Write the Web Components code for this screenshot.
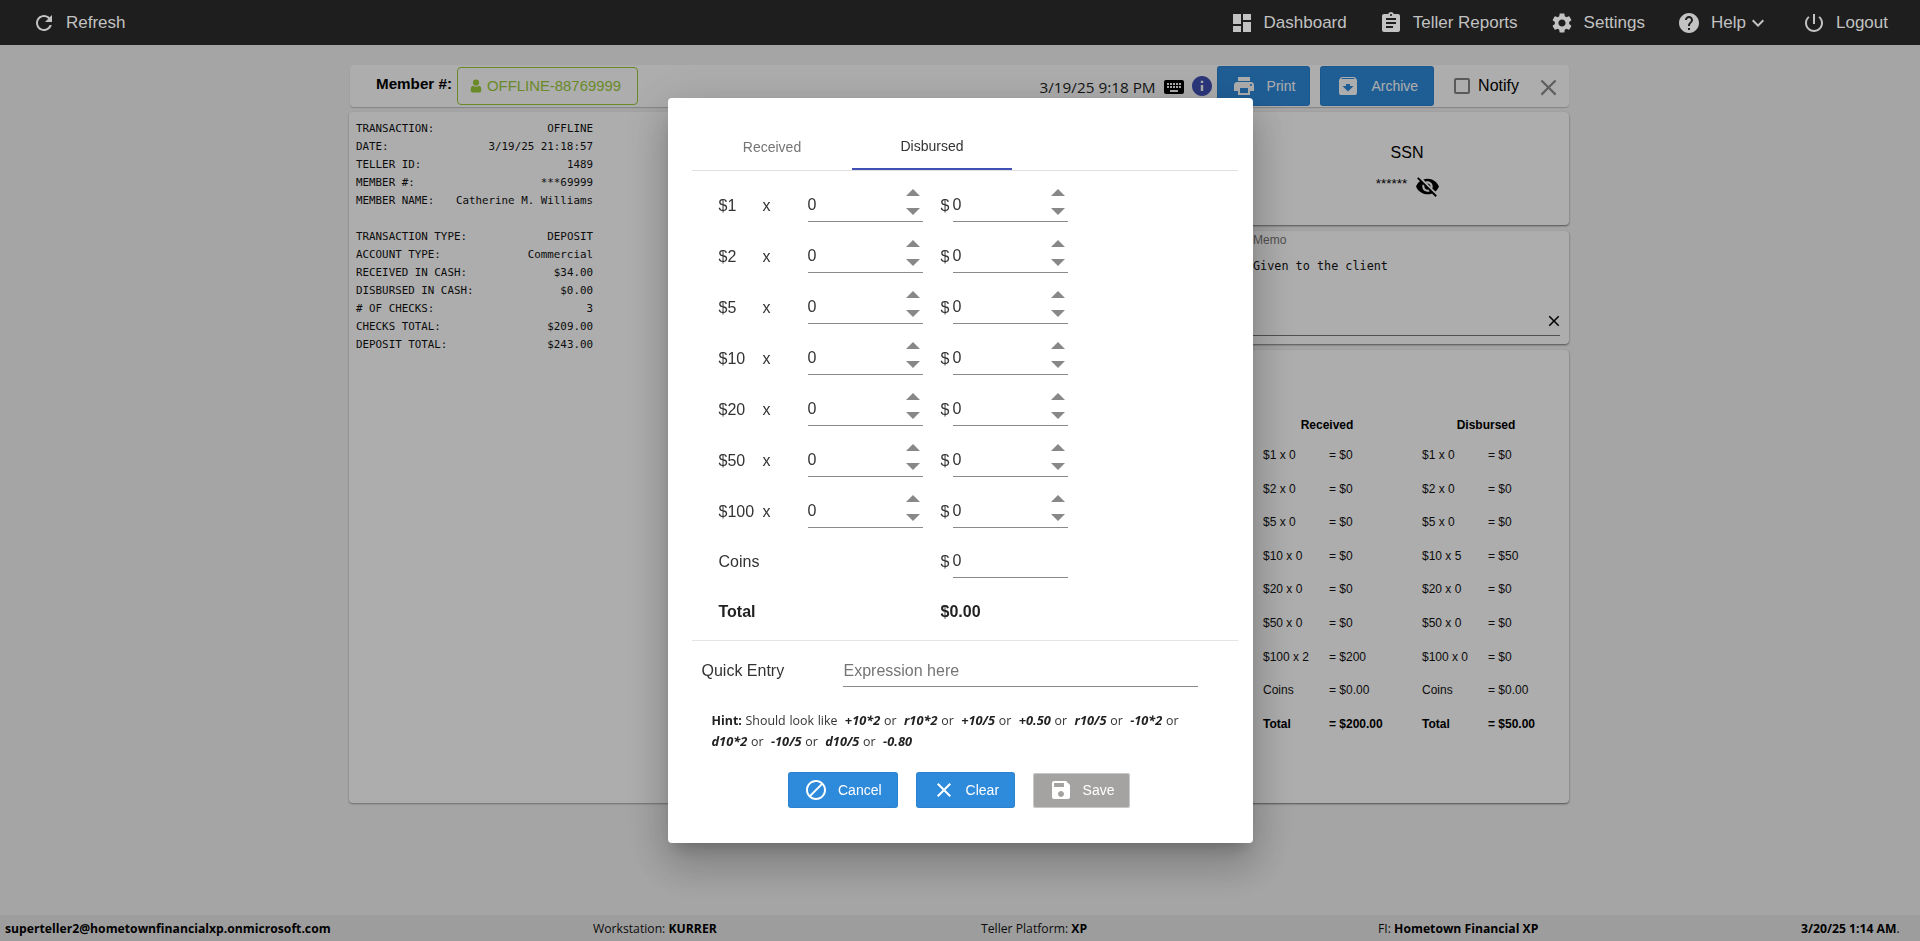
<!DOCTYPE html>
<html lang="en">
<head>
<meta charset="utf-8">
<title>Teller</title>
<style>
  html, body { margin: 0; height: 100%; }
  body { font-family: "Liberation Sans", Arial, sans-serif; color: #000; background: #f3f3f3; overflow: hidden; }
</style>
</head>
<body>
<teller-app>
  <teller-navbar slot="nav"></teller-navbar>
  <teller-toolbar slot="main"></teller-toolbar>
  <div slot="main" style="display:grid;grid-template-columns:1fr 324px;column-gap:6px;margin-left:-1px">
    <teller-receipt></teller-receipt>
    <div style="display:flex;flex-direction:column;row-gap:6px">
      <ssn-card></ssn-card>
      <memo-card></memo-card>
      <cash-summary></cash-summary>
    </div>
  </div>
  <status-bar slot="footer"></status-bar>
</teller-app>
<cash-dialog></cash-dialog>

<script>
const ICONS = {
  refresh: 'M17.65 6.35C16.2 4.9 14.21 4 12 4c-4.42 0-7.99 3.58-7.99 8s3.57 8 7.99 8c3.73 0 6.84-2.55 7.73-6h-2.08c-.82 2.33-3.04 4-5.65 4-3.31 0-6-2.69-6-6s2.69-6 6-6c1.66 0 3.14.69 4.22 1.78L13 11h7V4l-2.35 2.35z',
  dashboard: 'M3 13h8V3H3v10zm0 8h8v-6H3v6zm10 0h8V11h-8v10zm0-18v6h8V3h-8z',
  reports: 'M19 3h-4.18C14.4 1.84 13.3 1 12 1c-1.3 0-2.4.84-2.82 2H5c-1.1 0-2 .9-2 2v14c0 1.1.9 2 2 2h14c1.1 0 2-.9 2-2V5c0-1.1-.9-2-2-2zm-7 0c.55 0 1 .45 1 1s-.45 1-1 1-1-.45-1-1 .45-1 1-1zm2 14H7v-2h7v2zm3-4H7v-2h10v2zm0-4H7V7h10v2z',
  settings: 'M19.14 12.94c.04-.3.06-.61.06-.94 0-.32-.02-.64-.07-.94l2.03-1.58c.18-.14.23-.41.12-.61l-1.92-3.32c-.12-.22-.37-.29-.59-.22l-2.39.96c-.5-.38-1.03-.7-1.62-.94l-.36-2.54c-.04-.24-.24-.41-.48-.41h-3.84c-.24 0-.43.17-.47.41l-.36 2.54c-.59.24-1.13.57-1.62.94l-2.39-.96c-.22-.08-.47 0-.59.22L2.74 8.87c-.12.21-.08.47.12.61l2.03 1.58c-.05.3-.09.63-.09.94s.02.64.07.94l-2.03 1.58c-.18.14-.23.41-.12.61l1.92 3.32c.12.22.37.29.59.22l2.39-.96c.5.38 1.03.7 1.62.94l.36 2.54c.05.24.24.41.48.41h3.84c.24 0 .44-.17.47-.41l.36-2.54c.59-.24 1.13-.56 1.62-.94l2.39.96c.22.08.47 0 .59-.22l1.92-3.32c.12-.22.07-.47-.12-.61l-2.01-1.58zM12 15.6c-1.98 0-3.6-1.62-3.6-3.6s1.62-3.6 3.6-3.6 3.6 1.62 3.6 3.6-1.62 3.6-3.6 3.6z',
  help: 'M12 2C6.48 2 2 6.48 2 12s4.48 10 10 10 10-4.48 10-10S17.52 2 12 2zm1 17h-2v-2h2v2zm2.07-7.75l-.9.92C13.45 12.9 13 13.5 13 15h-2v-.5c0-1.1.45-2.1 1.17-2.83l1.24-1.26c.37-.36.59-.86.59-1.41 0-1.1-.9-2-2-2s-2 .9-2 2H8c0-2.21 1.79-4 4-4s4 1.79 4 4c0 .88-.36 1.68-.93 2.25z',
  chevron: 'M16.59 8.59L12 13.17 7.41 8.59 6 10l6 6 6-6z',
  power: 'M13 3h-2v10h2V3zm4.83 2.17l-1.42 1.42C17.99 7.86 19 9.81 19 12c0 3.87-3.13 7-7 7s-7-3.13-7-7c0-2.19 1.01-4.14 2.58-5.42L6.17 5.17C4.23 6.82 3 9.26 3 12c0 4.97 4.03 9 9 9s9-4.03 9-9c0-2.74-1.23-5.18-3.17-6.83z',
  print: 'M19 8H5c-1.66 0-3 1.34-3 3v6h4v4h12v-4h4v-6c0-1.66-1.34-3-3-3zm-3 11H8v-5h8v5zm3-7c-.55 0-1-.45-1-1s.45-1 1-1 1 .45 1 1-.45 1-1 1zm-1-9H6v4h12V3z',
  archive: 'M20.54 5.23l-1.39-1.68C18.88 3.21 18.47 3 18 3H6c-.47 0-.88.21-1.16.55L3.46 5.23C3.17 5.57 3 6.02 3 6.5V19c0 1.1.9 2 2 2h14c1.1 0 2-.9 2-2V6.5c0-.48-.17-.93-.46-1.27zM12 17.5L6.5 12H10v-2h4v2h3.5L12 17.5zM5.12 5l.81-1h12l.94 1H5.12z',
  save: 'M17 3H5c-1.11 0-2 .9-2 2v14c0 1.1.89 2 2 2h14c1.1 0 2-.9 2-2V7l-4-4zm-5 16c-1.66 0-3-1.34-3-3s1.34-3 3-3 3 1.34 3 3-1.34 3-3 3zm3-10H5V5h10v4z',
  block: 'M12 2C6.48 2 2 6.48 2 12s4.48 10 10 10 10-4.48 10-10S17.52 2 12 2zM4 12c0-4.42 3.58-8 8-8 1.85 0 3.55.63 4.9 1.69L5.69 16.9C4.63 15.55 4 13.85 4 12zm8 8c-1.85 0-3.55-.63-4.9-1.69L18.31 7.1C19.37 8.45 20 10.15 20 12c0 4.42-3.58 8-8 8z',
  close: 'M19 6.41L17.59 5 12 10.59 6.41 5 5 6.41 10.59 12 5 17.59 6.41 19 12 13.41 17.59 19 19 17.59 13.41 12z',
  eyeoff: 'M12 7c2.76 0 5 2.24 5 5 0 .65-.13 1.26-.36 1.83l2.92 2.92c1.51-1.26 2.7-2.89 3.43-4.75-1.73-4.39-6-7.5-11-7.5-1.4 0-2.74.25-3.98.7l2.16 2.16C10.74 7.13 11.35 7 12 7zM2 4.27l2.28 2.28.46.46C3.08 8.3 1.78 10.02 1 12c1.73 4.39 6 7.5 11 7.5 1.55 0 3.03-.3 4.38-.84l.42.42L19.73 22 21 20.73 3.27 3 2 4.27zM7.53 9.8l1.55 1.55c-.05.21-.08.43-.08.65 0 1.66 1.34 3 3 3 .22 0 .44-.03.65-.08l1.55 1.55c-.67.33-1.41.53-2.2.53-2.76 0-5-2.24-5-5 0-.79.2-1.53.53-2.2zm4.31-.78l3.15 3.15.02-.16c0-1.66-1.34-3-3-3l-.17.01z',
  keyboard: 'M20 5H4c-1.1 0-1.99.9-1.99 2L2 17c0 1.1.9 2 2 2h16c1.1 0 2-.9 2-2V7c0-1.1-.9-2-2-2zm-9 3h2v2h-2V8zm0 3h2v2h-2v-2zM8 8h2v2H8V8zm0 3h2v2H8v-2zm-1 2H5v-2h2v2zm0-3H5V8h2v2zm9 7H8v-2h8v2zm0-4h-2v-2h2v2zm0-3h-2V8h2v2zm3 3h-2v-2h2v2zm0-3h-2V8h2v2z',
  info: 'M12 2C6.48 2 2 6.48 2 12s4.48 10 10 10 10-4.48 10-10S17.52 2 12 2zm1.2 15h-2.4v-6h2.4v6zm0-8h-2.4V6.8h2.4V9z',
  user: 'M12 2.2a4.7 4.7 0 1 1 0 9.4 4.7 4.7 0 0 1 0-9.4zM7.6 11.6c1.2 1 2.7 1.5 4.4 1.5s3.2-.5 4.4-1.5c2 .3 3.4 2 3.4 4.3v3.4c0 1.5-1 2.5-2.4 2.5H6.6c-1.4 0-2.4-1-2.4-2.5v-3.4c0-2.3 1.4-4 3.4-4.3z'
};

function icon(name, size = 24) {
  return `<svg width="${size}" height="${size}" viewBox="0 0 24 24" fill="currentColor" style="flex:none;display:block"><path d="${ICONS[name]}"/></svg>`;
}

class TellerApp extends HTMLElement {
  constructor() {
    super();
    this.attachShadow({ mode: 'open' });
    this.shadowRoot.innerHTML = `
      <style>
        :host { display: flex; flex-direction: column; height: 100vh; }
        main { flex: 1; min-height: 0; width: 1220px; margin: 0 auto; padding: 20px 1px 0 0; display: flex; flex-direction: column; row-gap: 5px; box-sizing: border-box; }
      </style>
      <slot name="nav"></slot>
      <main><slot name="main"></slot></main>
      <slot name="footer"></slot>
    `;
  }
}

class TellerNavbar extends HTMLElement {
  constructor() {
    super();
    this.attachShadow({ mode: 'open' });
    const item = (ic, label, extra = '') => `<a class="item">${icon(ic)}<span>${label}</span>${extra}</a>`;
    this.shadowRoot.innerHTML = `
      <style>
        :host { display: block; position: relative; z-index: 2; }
        nav { height: 45px; background: #1e1e1e; color: #c2c2c2; display: flex; align-items: center; justify-content: space-between; padding: 0 32px; font-size: 17px; }
        .group { display: flex; column-gap: 32px; }
        .item { display: flex; align-items: center; column-gap: 10px; }
        .help { margin-left: -10px; }
      </style>
      <nav>
        ${item('refresh', 'Refresh')}
        <div class="group">
          ${item('dashboard', 'Dashboard')}
          ${item('reports', 'Teller Reports')}
          ${item('settings', 'Settings')}
          <a class="item">${icon('help')}<span>Help</span><span class="help">${icon('chevron')}</span></a>
          ${item('power', 'Logout')}
        </div>
      </nav>
    `;
  }
}

class TellerButton extends HTMLElement {
  constructor() {
    super();
    this.attachShadow({ mode: 'open' });
    this.shadowRoot.innerHTML = `
      <style>
        :host { display: inline-flex; align-items: center; column-gap: var(--btn-gap, 10px); height: var(--btn-h, 36px); padding: 0 var(--btn-pad, 16px); background: #2e8bdc; color: #fff; border-radius: 3px; font-size: 14px; box-sizing: border-box; box-shadow: inset 0 0 0 1px rgba(0,0,0,.06); }
        :host([disabled]) { background: #a5a3a1; box-shadow: inset 0 0 0 1px #c9c7c5; padding: 0 15.5px; height: 35px; }
      </style>
      ${icon(this.getAttribute('icon'))}
      <slot></slot>
    `;
  }
}

class TellerToolbar extends HTMLElement {
  constructor() {
    super();
    this.attachShadow({ mode: 'open' });
    this.shadowRoot.innerHTML = `
      <style>
        :host { display: flex; align-items: center; height: 42px; background: #fff; border-radius: 4px; box-shadow: 0 1px 1px rgba(0,0,0,.2); padding: 0 7px 0 26px; box-sizing: border-box; }
        .label { font-weight: 700; font-size: 15.2px; margin: -5px 5px 0 0; }
        .member { display: flex; align-items: center; column-gap: 3px; width: 181px; height: 38px; box-sizing: border-box; padding-left: 10px; border: 1px solid #9ccc3c; border-radius: 4px; color: #9ccc3c; font-size: 14.9px; }
        .date { margin-left: auto; font-family: "Open Sans", sans-serif; font-size: 15.3px; color: #222; margin-top: 1px; }
        .kb { margin: 2px 0 0 6px; }
        .info { color: #3f51b5; margin: 0 3px 0 4px; }
        teller-button { --btn-h: 40px; --btn-gap: 11px; --btn-pad: 15px; }
        .archive { margin-left: 10px; --btn-pad: 16px; }
        .box { width: 16px; height: 16px; box-sizing: border-box; border: 2px solid #858585; border-radius: 2px; margin: 0 8px 0 20px; }
        .notify { font-size: 16px; }
        .close { color: #8d8d8d; margin: 2px 0 0 16px; }
      </style>
      <span class="label">Member #:</span>
      <div class="member">${icon('user', 16)}<span>OFFLINE-88769999</span></div>
      <span class="date">3/19/25 9:18 PM</span>
      <span class="kb">${icon('keyboard')}</span>
      <span class="info">${icon('info')}</span>
      <teller-button icon="print">Print</teller-button>
      <teller-button class="archive" icon="archive">Archive</teller-button>
      <span class="box"></span>
      <span class="notify">Notify</span>
      <span class="close">${icon('close', 27)}</span>
    `;
  }
}

class TellerReceipt extends HTMLElement {
  constructor() {
    super();
    this.attachShadow({ mode: 'open' });
    const rows = [
      ['TRANSACTION:', 'OFFLINE'],
      ['DATE:', '3/19/25 21:18:57'],
      ['TELLER ID:', '1489'],
      ['MEMBER #:', '***69999'],
      ['MEMBER NAME:', 'Catherine M. Williams'],
      null,
      ['TRANSACTION TYPE:', 'DEPOSIT'],
      ['ACCOUNT TYPE:', 'Commercial'],
      ['RECEIVED IN CASH:', '$34.00'],
      ['DISBURSED IN CASH:', '$0.00'],
      ['# OF CHECKS:', '3'],
      ['CHECKS TOTAL:', '$209.00'],
      ['DEPOSIT TOTAL:', '$243.00']
    ];
    const html = rows.map((r) => r ? `<div class="row"><span>${r[0]}</span><span>${r[1]}</span></div>` : '<div class="row"></div>').join('');
    this.shadowRoot.innerHTML = `
      <style>
        :host { display: block; background: #fff; border-radius: 4px; box-shadow: 0 1px 2px rgba(0,0,0,.35); padding: 8px 0 0 7px; height: 691px; box-sizing: border-box; }
        .rows { width: 237px; font-family: "DejaVu Sans Mono", monospace; font-size: 10.85px; color: #111; }
        .row { display: flex; justify-content: space-between; height: 18px; line-height: 18px; white-space: pre; }
      </style>
      <div class="rows">${html}</div>
    `;
  }
}

class SsnCard extends HTMLElement {
  constructor() {
    super();
    this.attachShadow({ mode: 'open' });
    this.shadowRoot.innerHTML = `
      <style>
        :host { display: flex; flex-direction: column; align-items: center; height: 113px; background: #fff; border-radius: 4px; box-shadow: 0 1px 2px rgba(0,0,0,.5); box-sizing: border-box; padding-top: 32px; }
        .title { font-size: 16px; line-height: 18px; }
        .value { display: flex; align-items: center; column-gap: 8px; margin-top: 12px; font-size: 13.5px; }
        .value span { margin-top: -6px; margin-left: 2px; }
      </style>
      <div class="title">SSN</div>
      <div class="value"><span>******</span>${icon('eyeoff', 25)}</div>
    `;
  }
}

class MemoCard extends HTMLElement {
  constructor() {
    super();
    this.attachShadow({ mode: 'open' });
    this.shadowRoot.innerHTML = `
      <style>
        :host { display: block; height: 113px; background: #fff; border-radius: 4px; box-shadow: 0 1px 2px rgba(0,0,0,.5); box-sizing: border-box; padding: 2px 9px 0 8px; }
        .label { font-size: 12px; line-height: 14px; color: #777; }
        .box { display: flex; flex-direction: column; height: 80px; margin-top: 9px; border-bottom: 1px solid #777; box-sizing: border-box; }
        .text { font-family: "DejaVu Sans Mono", monospace; font-size: 11.8px; line-height: 20px; flex: 1; color: #111; }
        .clear { align-self: flex-end; margin: 0 -3px 5px 0; }
      </style>
      <div class="label">Memo</div>
      <div class="box">
        <div class="text">Given to the client</div>
        <div class="clear">${icon('close', 18)}</div>
      </div>
    `;
  }
}

class CashSummary extends HTMLElement {
  constructor() {
    super();
    this.attachShadow({ mode: 'open' });
    const received = [['$1 x 0', '= $0'], ['$2 x 0', '= $0'], ['$5 x 0', '= $0'], ['$10 x 0', '= $0'], ['$20 x 0', '= $0'], ['$50 x 0', '= $0'], ['$100 x 2', '= $200'], ['Coins', '= $0.00'], ['Total', '= $200.00']];
    const disbursed = [['$1 x 0', '= $0'], ['$2 x 0', '= $0'], ['$5 x 0', '= $0'], ['$10 x 5', '= $50'], ['$20 x 0', '= $0'], ['$50 x 0', '= $0'], ['$100 x 0', '= $0'], ['Coins', '= $0.00'], ['Total', '= $50.00']];
    const col = (title, rows) => `
      <div class="col">
        <div class="head">${title}</div>
        ${rows.map((r) => `<div class="row${r[0] === 'Total' ? ' total' : ''}"><span>${r[0]}</span><span>${r[1]}</span></div>`).join('')}
      </div>`;
    this.shadowRoot.innerHTML = `
      <style>
        :host { display: flex; height: 453px; background: #fff; border-radius: 4px; box-shadow: 0 1px 2px rgba(0,0,0,.5); box-sizing: border-box; padding: 67px 0 0 18px; font-size: 12px; color: #111; }
        .col { flex: none; width: 159px; }
        .head { font-weight: 700; height: 22px; line-height: 16px; text-align: center; width: 128px; color: #000; }
        .row { display: grid; grid-template-columns: 66px 1fr; height: 33.6px; line-height: 33.6px; }
        .total { font-weight: 700; color: #000; }
      </style>
      ${col('Received', received)}
      ${col('Disbursed', disbursed)}
    `;
  }
}

class StatusBar extends HTMLElement {
  constructor() {
    super();
    this.attachShadow({ mode: 'open' });
    this.shadowRoot.innerHTML = `
      <style>
        :host { display: flex; align-items: center; height: 26px; background: #e8e8e8; padding-left: 5px; font-family: "Open Sans", sans-serif; font-size: 12.2px; color: #111; white-space: nowrap; }
        b { color: #000; }
        .email { width: 588px; }
        .ws { width: 388px; }
        .tp { width: 397px; }
        .fi { width: 423px; }
      </style>
      <span class="email"><b>superteller2@hometownfinancialxp.onmicrosoft.com</b></span>
      <span class="ws">Workstation: <b>KURRER</b></span>
      <span class="tp">Teller Platform: <b>XP</b></span>
      <span class="fi">FI: <b>Hometown Financial XP</b></span>
      <span><b>3/20/25 1:14 AM</b>.</span>
    `;
  }
}

class DenomRow extends HTMLElement {
  constructor() {
    super();
    this.attachShadow({ mode: 'open' });
    const coins = this.hasAttribute('coins');
    const spin = coins ? '' : `
      <span class="spin">
        <svg width="14" height="7" viewBox="0 0 14 7"><path d="M7 0l7 7H0z" fill="#888"/></svg>
        <svg width="14" height="7" viewBox="0 0 14 7"><path d="M0 0h14L7 7z" fill="#888"/></svg>
      </span>`;
    this.shadowRoot.innerHTML = `
      <style>
        :host { display: grid; grid-template-columns: 44px 45px 115px 18px 12px 115px; align-items: end; height: ${coins ? 50 : 51}px; padding-left: 27px; font-size: 16px; color: #333; }
        .t { line-height: 20px; padding-bottom: 6px; }
        .field { display: flex; justify-content: space-between; align-items: flex-end; border-bottom: 1px solid #8a8a8a; }
        .spin { display: flex; flex-direction: column; row-gap: 12px; padding: 0 3px 6px 0; }
        .spin svg { display: block; }
      </style>
      <span class="t"><slot></slot></span>
      <span class="t">${coins ? '' : 'x'}</span>
      ${coins ? '<span></span>' : `<span class="field"><span class="t">0</span>${spin}</span>`}
      <span></span>
      <span class="t">$</span>
      <span class="field"><span class="t">0</span>${spin}</span>
    `;
  }
}

class CashDialog extends HTMLElement {
  constructor() {
    super();
    this.attachShadow({ mode: 'open' });
    this.shadowRoot.innerHTML = `
      <style>
        :host { position: fixed; inset: 0; z-index: 1; display: flex; align-items: center; justify-content: center; background: rgba(0,0,0,.32); }
        .dialog { width: 585px; height: 745px; box-sizing: border-box; padding: 24px 15px 24px 24px; background: #fff; border-radius: 4px; box-shadow: 0 11px 15px -7px rgba(0,0,0,.2), 0 24px 38px 3px rgba(0,0,0,.14), 0 9px 46px 8px rgba(0,0,0,.12); color: #333; font-size: 16px; }
        .tabs { display: flex; height: 49px; border-bottom: 1px solid #e0e0e0; box-sizing: border-box; font-size: 14px; }
        .tab { width: 160px; display: flex; align-items: center; justify-content: center; color: #757575; height: 48px; box-sizing: border-box; padding: 2px 0 0 1px; }
        .tab.active { color: #333; border-bottom: 2px solid #3f51b5; }
        .total { display: grid; grid-template-columns: 222px 1fr; height: 63px; box-sizing: border-box; padding: 24px 0 0 27px; line-height: 20px; font-weight: 700; color: #222; border-bottom: 1px solid #e4e4e4; }
        .quick { display: flex; align-items: flex-end; height: 46px; padding-left: 10px; }
        .quick span { width: 141px; line-height: 20px; padding-bottom: 6px; }
        .expr { width: 355px; box-sizing: border-box; border-bottom: 1px solid #8a8a8a; color: #757575; line-height: 20px; padding: 0 0 5px 1px; }
        .hint { margin: 23px 0 0 20px; width: 490px; font-family: "Open Sans", sans-serif; font-size: 12.4px; word-spacing: .5px; line-height: 20px; color: #333; }
        .hint strong { color: #222; }
        .hint em { color: #222; font-weight: 700; font-size: 12.8px; }
        .actions { display: flex; justify-content: center; align-items: center; column-gap: 18px; margin: 20px 11px 0 0; }
      </style>
      <div class="dialog">
        <div class="tabs">
          <div class="tab">Received</div>
          <div class="tab active">Disbursed</div>
        </div>
        <denom-row>$1</denom-row>
        <denom-row>$2</denom-row>
        <denom-row>$5</denom-row>
        <denom-row>$10</denom-row>
        <denom-row>$20</denom-row>
        <denom-row>$50</denom-row>
        <denom-row>$100</denom-row>
        <denom-row coins>Coins</denom-row>
        <div class="total"><span>Total</span><span>$0.00</span></div>
        <div class="quick"><span>Quick Entry</span><div class="expr">Expression here</div></div>
        <div class="hint"><strong>Hint:</strong> Should look like &nbsp;<em>+10*2</em> or &nbsp;<em>r10*2</em> or &nbsp;<em>+10/5</em> or &nbsp;<em>+0.50</em> or &nbsp;<em>r10/5</em> or &nbsp;<em>-10*2</em> or <em>d10*2</em> or &nbsp;<em>-10/5</em> or &nbsp;<em>d10/5</em> or &nbsp;<em>-0.80</em></div>
        <div class="actions">
          <teller-button icon="block">Cancel</teller-button>
          <teller-button icon="close">Clear</teller-button>
          <teller-button icon="save" disabled>Save</teller-button>
        </div>
      </div>
    `;
  }
}

customElements.define('teller-app', TellerApp);
customElements.define('teller-navbar', TellerNavbar);
customElements.define('teller-button', TellerButton);
customElements.define('teller-toolbar', TellerToolbar);
customElements.define('teller-receipt', TellerReceipt);
customElements.define('ssn-card', SsnCard);
customElements.define('memo-card', MemoCard);
customElements.define('cash-summary', CashSummary);
customElements.define('status-bar', StatusBar);
customElements.define('denom-row', DenomRow);
customElements.define('cash-dialog', CashDialog);
</script>
</body>
</html>
